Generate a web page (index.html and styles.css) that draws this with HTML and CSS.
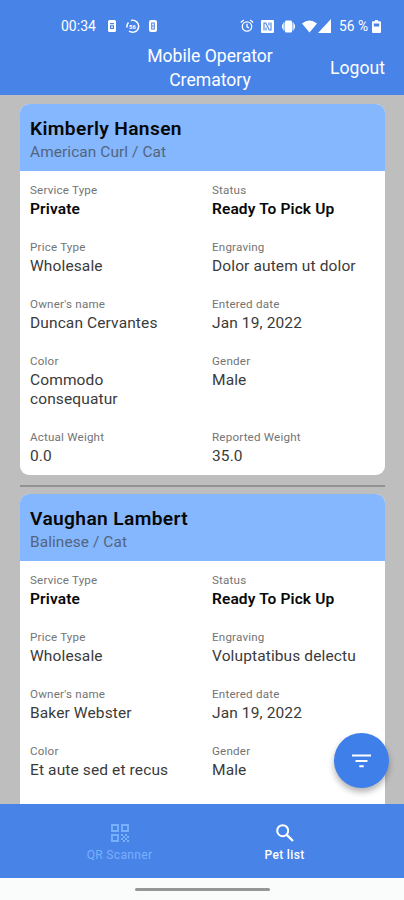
FILE: index.html
```
<!DOCTYPE html>
<html lang="en">
<head>
<meta charset="utf-8">
<title>Mobile Operator Crematory</title>
<link rel="stylesheet" href="styles.css">
</head>
<body>
<div class="app">
  <header class="top">
    <div class="status">
      <div class="status-left">
        <span class="clock">00:34</span>
        <svg class="i-sim" width="8" height="12" viewBox="0 0 8 12"><path fill="#fff" fill-rule="evenodd" d="M1.500 0h5A1.500 1.500 0 0 1 8 1.500v9A1.500 1.500 0 0 1 6.500 12h-5A1.500 1.500 0 0 1 0 10.500v-9A1.500 1.500 0 0 1 1.500 0zM2 3v1.200h4V3zM2 5.300V9h4V5.300zM3 6.400h2v1.300H3z"/></svg>
        <svg class="i-ring" width="14" height="15" viewBox="0 0 14 15"><path d="M5 1.500A6 6 0 1 1 3 12M1 8.500A6 6 0 0 1 2.500 3.500" fill="none" stroke="#fff" stroke-width="1.500"/><text x="6.500" y="10" class="ring-num">56</text></svg>
        <svg class="i-sim2" width="8" height="12" viewBox="0 0 8 12"><path fill="#fff" fill-rule="evenodd" d="M2 0h4a2 2 0 0 1 2 2v8a2 2 0 0 1-2 2H2a2 2 0 0 1-2-2V2a2 2 0 0 1 2-2zM2.200 2.500v7h3.600v-7zM3.200 3.500h1.600v2H3.200zM3.200 6.500h1.600v2H3.200z"/></svg>
      </div>
      <div class="status-right">
        <svg class="i-alarm" width="14" height="14" viewBox="0 0 14 14" fill="none" stroke="#fff" stroke-width="1.300"><circle cx="7" cy="7.500" r="4.700"/><path d="M7 4.800v3l2 1.200M.8 3.500l3-2.500M13.200 3.500l-3-2.500"/></svg>
        <svg class="i-nfc" width="13" height="13" viewBox="0 0 13 13"><rect width="13" height="13" rx="1" fill="#fff"/><path d="M3 10.500V3h1.800l3.400 7H10V2.500M8 2.500v3M5 7.500v3" fill="none" stroke="#4883e8" stroke-width="1.100"/></svg>
        <svg class="i-vib" width="13" height="13" viewBox="0 0 13 13" fill="#fff"><rect x="3" y=".5" width="7" height="12" rx="1.200"/><path d="M1.300 2.500h1.200v8H1.300zM0 4.500h1v4H0zM10.500 2.500h1.200v8h-1.200zM12 4.500h1v4h-1z"/></svg>
        <svg class="i-wifi" width="15" height="13" viewBox="0 0 15 13"><path fill="#fff" d="M0 3.500Q7.500-2.500 15 3.500L7.500 12.500z"/></svg>
        <svg class="i-cell" width="13" height="14" viewBox="0 0 13 14"><path fill="#fff" d="M13 0v14H0z"/></svg>
        <span class="pct">56 %</span>
        <svg class="i-batt" width="9" height="13" viewBox="0 0 9 13"><path fill="#fff" fill-rule="evenodd" d="M3 0h3v1.300h2a1 1 0 0 1 1 1V12a1 1 0 0 1-1 1H1a1 1 0 0 1-1-1V2.300a1 1 0 0 1 1-1h2zM1.800 3.500v3h5.400v-3z"/></svg>
      </div>
    </div>
    <div class="bar">
      <h1 class="title">Mobile Operator<br>Crematory</h1>
      <span class="logout">Logout</span>
    </div>
  </header>

  <main class="list">
    <article class="card">
      <div class="card-head"><h2 class="name">Kimberly Hansen</h2><p class="breed">American Curl / Cat</p></div>
      <dl class="fields">
        <div class="field"><dt>Service Type</dt><dd class="strong">Private</dd></div>
        <div class="field"><dt>Status</dt><dd class="strong">Ready To Pick Up</dd></div>
        <div class="field"><dt>Price Type</dt><dd>Wholesale</dd></div>
        <div class="field"><dt>Engraving</dt><dd>Dolor autem ut dolor</dd></div>
        <div class="field"><dt>Owner's name</dt><dd>Duncan Cervantes</dd></div>
        <div class="field"><dt>Entered date</dt><dd>Jan 19, 2022</dd></div>
        <div class="field"><dt>Color</dt><dd>Commodo<br>consequatur</dd></div>
        <div class="field"><dt>Gender</dt><dd>Male</dd></div>
        <div class="field"><dt>Actual Weight</dt><dd>0.0</dd></div>
        <div class="field"><dt>Reported Weight</dt><dd>35.0</dd></div>
      </dl>
    </article>
    <hr class="divider">
    <article class="card">
      <div class="card-head"><h2 class="name">Vaughan Lambert</h2><p class="breed">Balinese / Cat</p></div>
      <dl class="fields">
        <div class="field"><dt>Service Type</dt><dd class="strong">Private</dd></div>
        <div class="field"><dt>Status</dt><dd class="strong">Ready To Pick Up</dd></div>
        <div class="field"><dt>Price Type</dt><dd>Wholesale</dd></div>
        <div class="field"><dt>Engraving</dt><dd>Voluptatibus delectu</dd></div>
        <div class="field"><dt>Owner's name</dt><dd>Baker Webster</dd></div>
        <div class="field"><dt>Entered date</dt><dd>Jan 19, 2022</dd></div>
        <div class="field"><dt>Color</dt><dd>Et aute sed et recus</dd></div>
        <div class="field"><dt>Gender</dt><dd>Male</dd></div>
        <div class="field"><dt>Actual Weight</dt></div>
        <div class="field"><dt>Reported Weight</dt></div>
      </dl>
    </article>
  </main>

  <button class="fab" aria-label="Filter"><svg width="19" height="14" viewBox="0 0 19 14"><path d="M0 1.500h19M3.500 7h12M7.300 12.300h4.400" stroke="#fff" stroke-width="2"/></svg></button>

  <nav class="tabs">
    <div class="tab dim">
      <svg width="18" height="18" viewBox="0 0 18 18"><path d="M1 1h6v6H1zM11 1h6v6h-6zM1 11h6v6H1z" fill="none" stroke="currentColor" stroke-width="1.900"/><path fill="currentColor" d="M10 10h2v2h-2zM12 12h2v2h-2zM14 10h2v2h-2zM10 14h2v2h-2zM12 16h2v2h-2zM14 14h2v2h-2zM16 12h2v2h-2zM16 16h2v2h-2z"/></svg>
      <span>QR Scanner</span>
    </div>
    <div class="tab active">
      <svg width="18" height="18" viewBox="0 0 18 18" fill="none" stroke="currentColor"><circle cx="6.700" cy="6.700" r="5.500" stroke-width="2"/><path d="M10.800 10.800l6.200 6.200" stroke-width="2.400"/></svg>
      <span>Pet list</span>
    </div>
  </nav>
  <div class="system"><span class="handle"></span></div>
</div>
</body>
</html>
```
FILE: styles.css
```
* { box-sizing: border-box; }
body, h1, h2, p, dl, dd { margin: 0; }
body { font-family: Roboto, sans-serif; color: #3a3a3a; }
svg { display: block; flex: none; }

.app {
  position: relative;
  display: flex;
  flex-direction: column;
  width: 404px;
  height: 900px;
  overflow: hidden;
  background: #bebebe;
}

.top { flex: none; height: 95px; padding-top: 10px; background: #4883e8; color: #fff; }
.status {
  display: flex;
  justify-content: space-between;
  align-items: center;
  height: 32px;
  padding: 0 23px 0 61px;
}
.status-left, .status-right { display: flex; align-items: center; }
.clock { width: 47px; font-size: 14px; }
.i-ring { margin: 0 9px 0 10px; }
.ring-num { fill: #fff; font-size: 6px; font-weight: 700; text-anchor: middle; }
.i-nfc { margin-left: 7px; }
.i-vib { margin-left: 8px; }
.i-wifi { margin-left: 7px; }
.i-cell { margin: 0 8px 0 1px; }
.pct { width: 33px; font-size: 13.800px; white-space: nowrap; }

.bar {
  display: grid;
  grid-template-columns: 1fr 170px 1fr;
  align-items: center;
  height: 52px;
  padding: 0 19px;
}
.title { grid-column: 2; margin-left: 16px; font-size: 17.600px; font-weight: 400; line-height: 24px; text-align: center; white-space: nowrap; }
.logout { justify-self: end; margin-top: -1px; font-size: 17.600px; }

.list { flex: 1; min-height: 0; overflow: hidden; padding: 9px 19px 0 20px; }
.card { overflow: hidden; border-radius: 9px; background: #fff; }
.card-head { height: 67px; padding: 12px 10px 0; background: #84b7fe; }
.card + .divider + .card .card-head { height: 67.500px; }
.name { color: #080808; font-size: 19.200px; font-weight: 600; line-height: 25px; letter-spacing: 0.350px; }
.breed { color: #53647d; font-size: 15.400px; line-height: 23px; letter-spacing: 0.100px; }

.fields {
  display: grid;
  grid-template-columns: 182px 1fr;
  row-gap: 19px;
  padding: 10px 10px 9px;
}
dt { color: #747474; font-size: 11.600px; line-height: 19px; letter-spacing: 0.200px; }
dd { font-size: 15.500px; line-height: 19px; letter-spacing: 0.120px; white-space: nowrap; }
.strong { color: #080808; font-weight: 600; }

.divider { height: 2px; margin: 10px 0 7px; border: 0; background: #929292; }
.card + .divider + .card .card-head { height: 67px; }

.fab {
  position: absolute;
  right: 15px;
  bottom: 112px;
  display: grid;
  place-items: center;
  width: 55px;
  height: 55px;
  padding: 0;
  border: 0;
  border-radius: 50%;
  background: #3f7fe9;
  box-shadow: 0 4px 6px rgba(0, 0, 0, 0.300);
}

.tabs { flex: none; display: flex; justify-content: center; height: 74px; background: #4883e8; }
.tab { display: flex; flex-direction: column; align-items: center; width: 165px; padding-top: 20px; font-size: 12px; line-height: 16px; letter-spacing: 0.350px; }
.tab span { margin-top: 5px; }
.dim { color: #79b0fb; }
.active { color: #fff; font-weight: 500; }

.system { flex: none; display: flex; justify-content: center; height: 22px; padding-top: 10px; background: #fafbfb; }
.handle { width: 135px; height: 3px; border-radius: 2px; background: #969696; }
```
